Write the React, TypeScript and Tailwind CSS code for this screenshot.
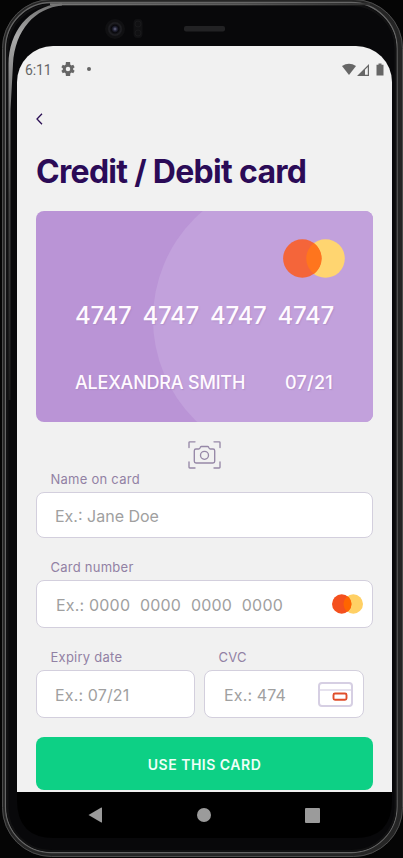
import React from "react";

function PhoneFrame() {
  return (
    <svg className="absolute inset-0" width="403" height="858" viewBox="0 0 403 858" fill="none" aria-hidden="true">
      <defs>
        <linearGradient id="rim" gradientUnits="userSpaceOnUse" x1="0" y1="0" x2="0" y2="400">
          <stop offset="0" stopColor="#6a6a6a" />
          <stop offset="0.09" stopColor="#aaaaaa" />
          <stop offset="0.2" stopColor="#858585" />
          <stop offset="0.5" stopColor="#444444" />
          <stop offset="1" stopColor="#1c1c1c" />
        </linearGradient>
        <linearGradient id="topEdge" gradientUnits="userSpaceOnUse" x1="50" y1="0" x2="370" y2="0">
          <stop offset="0" stopColor="#777777" />
          <stop offset="0.6" stopColor="#5a5a5a" />
          <stop offset="1" stopColor="#303030" />
        </linearGradient>
        <radialGradient id="lens">
          <stop offset="0" stopColor="#6c6d85" />
          <stop offset="0.25" stopColor="#25263a" />
          <stop offset="0.5" stopColor="#08080c" />
          <stop offset="0.8" stopColor="#202024" />
          <stop offset="1" stopColor="#111113" />
        </radialGradient>
      </defs>
      <rect x="2" y="-1" width="401" height="858" rx="50" fill="#252525" />
      <rect x="2.5" y="-0.5" width="400" height="857" rx="49" stroke="#4c4c4c" />
      <rect x="5.5" y="2.5" width="391.5" height="850" rx="46" fill="#08080a" stroke="#666666" strokeWidth="1.3" />
      <rect x="7.5" y="5" width="388" height="846" rx="44" stroke="#111112" strokeWidth="2" />
      <path d="M8.5 400V64C9 32 28 7 60 3.5H62V5.5C35 8 15 30 13 64L10.5 110V400Z" fill="url(#rim)" />
      <path d="M50 4.3H370" stroke="url(#topEdge)" strokeWidth="2" />
      <path d="M17 792H392V800Q392 838 355 838H54Q17 838 17 800Z" fill="#000000" />
      <circle cx="115" cy="29" r="10" fill="#101012" />
      <circle cx="115" cy="29" r="7.5" fill="url(#lens)" />
      <rect x="133.5" y="19" width="9" height="19" rx="4" fill="#111113" />
      <circle cx="138" cy="24" r="3" stroke="#19191b" />
      <circle cx="138" cy="33" r="3" stroke="#19191b" />
      <rect x="184" y="26" width="41" height="5.5" rx="2" fill="#222224" />
    </svg>
  );
}

function StatusBar() {
  return (
    <div className="flex h-[46px] items-center pl-[8px] pr-[8px] text-[#666666]">
      <span className="w-[36px] whitespace-nowrap pt-[2px] font-['Roboto',sans-serif] text-[14px] leading-[16px] tracking-[-0.1px]">6:11</span>
      <svg width="14" height="14" viewBox="2 2 20 20" fill="currentColor">
        <path d="M19.4 13a7.8 7.8 0 0 0 0-2l2.1-1.6-2-3.5-2.5 1a7.6 7.6 0 0 0-1.7-1L15 2H9l-.4 3.9a7.6 7.6 0 0 0-1.7 1l-2.4-1-2 3.5L4.6 11a7.8 7.8 0 0 0 0 2l-2.1 1.6 2 3.5 2.4-1a7.6 7.6 0 0 0 1.7 1L9 22h6l.4-3.9a7.6 7.6 0 0 0 1.7-1l2.4 1 2-3.5ZM12 15.2a3.2 3.2 0 1 1 0-6.4 3.2 3.2 0 0 1 0 6.4Z" />
      </svg>
      <span className="ml-[12px] h-1 w-1 rounded-full bg-[#666666]" />
      <svg className="ml-auto mt-[1px]" width="42" height="14" viewBox="0 0 42 14" fill="currentColor">
        <path d="M0 3Q7-1.6 14 3L7 12Z" />
        <path d="M15 13 27 1V13ZM23 6.8V11.8H25.8V4Z" fillRule="evenodd" />
        <path d="M34.5 1.7H36.5V.5H39.5V1.7H41.5V12.5H34.5Z" />
      </svg>
    </div>
  );
}

function CardBrand({ size }: { size: "large" | "small" }) {
  const large = size === "large";
  return (
    <svg width={large ? 62 : 31} height={large ? 39 : 20} viewBox={large ? "0 0 62 39" : "0 0 31 20"}>
      {large ? (
        <>
          <circle cx="42.5" cy="19.5" r="19.3" fill="#ffd570" />
          <circle cx="19.3" cy="19.5" r="19.2" fill="#f4653a" />
          <path d="M30.9 4.1A19.3 19.3 0 0 1 30.9 34.9A19.3 19.3 0 0 1 30.9 4.1Z" fill="#ff751d" />
        </>
      ) : (
        <>
          <circle cx="21.3" cy="10" r="9.7" fill="#ffd064" />
          <circle cx="9.7" cy="10" r="9.7" fill="#f4501e" />
          <path d="M15.5 2.2A9.7 9.7 0 0 1 15.5 17.8A9.7 9.7 0 0 1 15.5 2.2Z" fill="#ff6500" />
        </>
      )}
    </svg>
  );
}

function PaymentCard() {
  return (
    <div className="relative h-[211px] overflow-hidden rounded-[8px] bg-[#ba94d6] text-[#fffaff]">
      <div className="absolute left-[117px] top-[-34px] h-[284px] w-[284px] rounded-full bg-[#c2a1dc]" />
      <div className="relative flex h-full flex-col pl-[39px] pr-[28px] pt-[28px] [text-shadow:1px_1px_1px_#a482bd80]">
        <div className="flex h-[39px] justify-end">
          <CardBrand size="large" />
        </div>
        <div className="mt-[22px] flex h-8 w-[259px] items-center justify-between whitespace-nowrap text-[24px] font-medium leading-8 tracking-[-0.25px]">
          <span>4747</span><span>4747</span><span>4747</span><span>4747</span>
        </div>
        <div className="mt-[39px] flex h-6 w-[258px] items-center justify-between whitespace-nowrap text-[18px] font-medium leading-6">
          <span className="tracking-[-0.2px]">ALEXANDRA SMITH</span>
          <span className="tracking-[0.25px]">07/21</span>
        </div>
      </div>
    </div>
  );
}

function ScanIcon() {
  return (
    <svg width="33" height="28" viewBox="0 0 33 28" fill="none" stroke="#9688a7" strokeWidth="1.35" strokeLinecap="round" strokeLinejoin="round">
      <path d="M1 6.5V1.5Q1 .8 1.8 .8H7M26 .8H31.2Q32 .8 32 1.6V6.5M1 21V26.2Q1 27 1.8 27H7M26 27H31.2Q32 27 32 26.2V21" />
      <path d="M8 8H10.7Q11.5 8 12 7L12.3 6.3Q12.7 5.5 13.5 5.5H19.5Q20.3 5.5 20.7 6.3L21 7Q21.5 8 22.3 8H25Q26.7 8 26.7 9.7V20.3Q26.7 22 25 22H8Q6.3 22 6.3 20.3V9.7Q6.3 8 8 8Z" />
      <circle cx="16.5" cy="14.3" r="4" />
    </svg>
  );
}

function CvcIcon() {
  return (
    <svg width="35" height="25" viewBox="0 0 35 25" fill="none">
      <rect x="1" y="1" width="33" height="23" rx="3" stroke="#d6cfe3" strokeWidth="2" />
      <path d="M2 8H33" stroke="#d6cfe3" strokeWidth="1.2" />
      <rect x="15.5" y="11.5" width="13" height="6.3" rx="1.5" stroke="#e04e2a" strokeWidth="1.9" />
    </svg>
  );
}

function Label({ children }: { children: React.ReactNode }) {
  return <div className="h-5 whitespace-nowrap pl-[14.5px] text-[13px] leading-5 tracking-[0.25px] text-[#9181a4]">{children}</div>;
}

function Field({ children, className }: { children: React.ReactNode; className: string }) {
  return (
    <div className={`flex items-center rounded-[8px] border border-[#d3cfdd] bg-white text-[16px] text-[#a0a0a0] ${className}`}>
      {children}
    </div>
  );
}

export default function App() {
  return (
    <div className="relative h-[858px] w-[403px] overflow-hidden bg-[#050505] font-['Inter',sans-serif]">
      <PhoneFrame />
      <div className="relative ml-[17px] flex h-[858px] w-[375px] flex-col pt-[46px]">
        <main className="flex h-[746px] shrink-0 flex-col overflow-hidden rounded-t-[36px] bg-[#f1f1f1]">
          <StatusBar />
          <div className="flex flex-col pl-[19px] pr-[19px]">
            <button className="mt-[21px] flex h-3 w-3 items-center" aria-label="Back">
              <svg width="8" height="12" viewBox="0 0 8 12" fill="none" stroke="#2c1055" strokeWidth="1.3"><path d="M6 .8 1 6 6 11.2" /></svg>
            </button>
            <h1 className="mt-[27px] h-10 whitespace-nowrap text-[32px] font-bold leading-10 tracking-[-0.7px] text-[#2b0b57]">Credit / Debit card</h1>
            <div className="mt-[19px]"><PaymentCard /></div>
            <div className="mt-[19px] flex h-[28px] justify-center"><ScanIcon /></div>
            <Label>Name on card</Label>
            <Field className="mt-[3px] h-[46px] pl-[18px] pt-px tracking-[0px]">Ex.: Jane Doe</Field>
            <div className="mt-[19px]"><Label>Card number</Label></div>
            <Field className="mt-[3px] h-[48px] justify-between pl-[19px] pr-[9px]">
              <span className="flex whitespace-nowrap pt-px">
                <span className="w-[33px] tracking-[0.15px]">Ex.:</span>
                <span className="flex w-[194px] justify-between tracking-[0.2px]"><span>0000</span><span>0000</span><span>0000</span><span>0000</span></span>
              </span>
              <CardBrand size="small" />
            </Field>
            <div className="mt-[19px] flex gap-[9px]">
              <div className="w-[159px]">
                <Label>Expiry date</Label>
                <Field className="mt-[3px] h-[48px] pl-[18px] pt-px tracking-[0.15px]">Ex.: 07/21</Field>
              </div>
              <div className="w-[160px]">
                <Label>CVC</Label>
                <Field className="mt-[3px] h-[48px] justify-between pl-[19px] pr-[10px]"><span className="pt-px tracking-[0.15px]">Ex.: 474</span><CvcIcon /></Field>
              </div>
            </div>
            <button className="mt-[19px] h-[53px] rounded-[8px] bg-[#0dd085] pt-[2px] text-[14px] font-semibold tracking-[0.5px] text-[#effff8]">USE THIS CARD</button>
          </div>
        </main>
        <nav className="flex h-[46px] items-center justify-between pl-[71px] pr-[72px]">
          <svg width="15" height="16" viewBox="0 0 15 16" fill="#9b9b9b"><path d="M.5 8 13.3.5Q14 .2 14 1V15Q14 15.8 13.3 15.5Z" /></svg>
          <span className="h-[14px] w-[14px] rounded-full bg-[#9b9b9b]" />
          <span className="h-[15px] w-[15px] rounded-[1px] bg-[#9b9b9b]" />
        </nav>
      </div>
    </div>
  );
}
